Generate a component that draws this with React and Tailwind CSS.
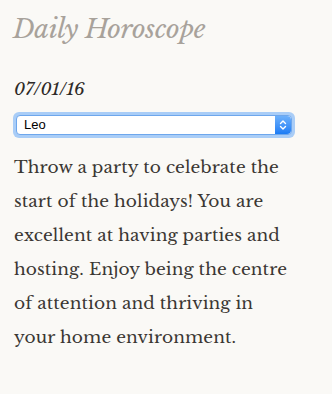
import React from 'react';

const Stepper = () => (
  <div className="flex items-center justify-center w-[16px] h-full rounded-r-[4px] bg-gradient-to-b from-[#6cb0fb] to-[#1a7cf5]">
    <svg width="8" height="12" viewBox="0 0 8 12" fill="none" stroke="white" strokeWidth="1.4" strokeLinecap="round" strokeLinejoin="round">
      <path d="M1.5 4.5 L4 2 L6.5 4.5" />
      <path d="M1.5 7.5 L4 10 L6.5 7.5" />
    </svg>
  </div>
);

export default function App() {
  return (
    <div className="min-h-[394px] w-full bg-[#faf9f6] px-[13px] pt-[11px] font-['Libre_Baskerville','DejaVu_Serif',serif]">
      <h1 className="text-[26px] leading-[36px] italic text-[#a8a29b] tracking-[-0.3px]">Daily Horoscope</h1>
      <p className="mt-[31px] text-[17px] leading-[24px] italic text-[#2d2a27] pl-[1px]">07/01/16</p>
      <div className="mt-[10px] w-[282px] h-[26px] rounded-[6px] bg-[#a9cdf7] p-[3px]">
        <div className="flex h-full rounded-[4px] border border-[#6ea7ec] bg-white">
          <span className="flex-1 pl-[7px] font-['Liberation_Sans',sans-serif] text-[13px] leading-[18px] text-black">Leo</span>
          <Stepper />
        </div>
      </div>
      <p className="mt-[13px] pl-[1px] w-[281px] text-[17px] leading-[34px] text-[#3a3733] tracking-[0.1px]">
        Throw a party to celebrate the start of the holidays! You are excellent at having parties and hosting. Enjoy being the centre of attention and thriving in your home environment.
      </p>
    </div>
  );
}
